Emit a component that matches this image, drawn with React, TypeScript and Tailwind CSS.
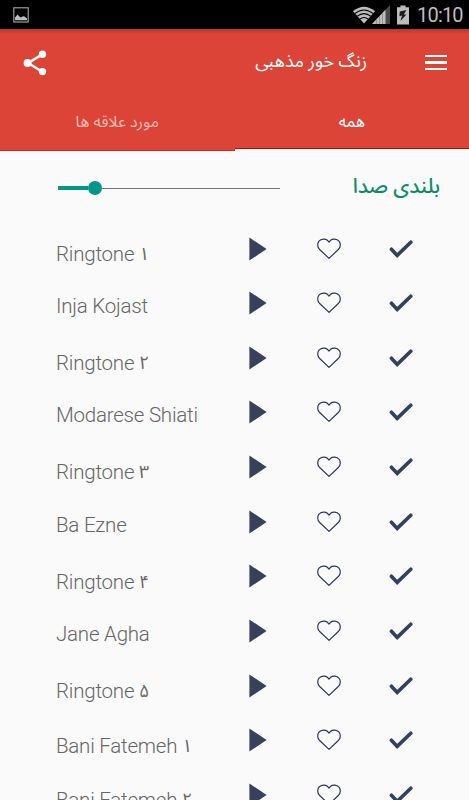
import React from 'react';

interface Ringtone {
  name: string;
  digit?: string;
}

const ringtones: Ringtone[] = [
  { name: 'Ringtone', digit: '۱' },
  { name: 'Inja Kojast' },
  { name: 'Ringtone', digit: '۲' },
  { name: 'Modarese Shiati' },
  { name: 'Ringtone', digit: '۳' },
  { name: 'Ba Ezne' },
  { name: 'Ringtone', digit: '۴' },
  { name: 'Jane Agha' },
  { name: 'Ringtone', digit: '۵' },
  { name: 'Bani Fatemeh', digit: '۱' },
  { name: 'Bani Fatemeh', digit: '۲' },
];

const StatusBar = () => (
  <div className="flex h-[29px] shrink-0 items-center justify-between bg-black pr-[7px] pl-[13px] text-[#bdbdbd]">
    <svg width="16" height="16" viewBox="0 0 16 16" fill="none">
      <rect x="0.8" y="0.8" width="14.4" height="14.2" stroke="#a9a9a9" strokeWidth="1.1" />
      <path d="M2 13.3V10.6L4.6 7.4L6.3 9.4L8 10.4L10 9.3L11.5 9.6L14 11.6V13.3Z" fill="#bdbdbd" />
    </svg>
    <div className="flex items-center">
      <svg width="24" height="20" viewBox="0 0 24 20" fill="none">
        <path d="M1 6.2Q12 -2.8 23 6.2L12 18.6Z" fill="#bdbdbd" />
        <path d="M2.6 8.6Q12 1.3 21.4 8.6M5.1 11.3Q12 5.9 18.9 11.3M7.8 14.1Q12 10.8 16.2 14.1" stroke="#000" strokeWidth="1.1" />
      </svg>
      <svg className="-ml-[4px]" width="18" height="20" viewBox="0 0 18 20">
        <path d="M0 19L18 0V19Z" fill="#4a4a4a" />
        <path d="M0 19L13.5 4.8V19Z" fill="#bdbdbd" />
        <path d="M4.5 14V19M7.5 11V19M10.5 8V19" stroke="#888" strokeWidth="0.8" />
      </svg>
      <svg className="ml-[7px]" width="12" height="20" viewBox="0 0 12 20">
        <path d="M3.4 0.6H8.6V2.2H12V19.4H0V2.2H3.4Z" fill="#bdbdbd" />
        <path d="M9.4 5L2.8 6.6L2.4 11.2L5 10.6L3.4 16L9.4 9.4L6.8 9.6Z" fill="#1c1c1c" />
      </svg>
      <span className="ml-[8px] w-[45px] pt-[2px] text-[20px] leading-[29px] tracking-[-0.8px] whitespace-nowrap">10:10</span>
    </div>
  </div>
);

const ShareIcon = () => (
  <svg width="24" height="26" viewBox="0 0 24 26" fill="#fff">
    <path d="M19 4.6L5 13L19 21.6" fill="none" stroke="#fff" strokeWidth="2.4" />
    <circle cx="19.5" cy="4.2" r="3.7" />
    <circle cx="4.6" cy="13" r="4" />
    <circle cx="19.5" cy="21.6" r="3.7" />
  </svg>
);

const PlayIcon = () => (
  <svg width="18" height="24" viewBox="0 0 18 24">
    <path d="M0.4 0.5L17.6 12L0.4 23.5Z" fill="#37415c" />
  </svg>
);

const HeartIcon = () => (
  <svg width="24" height="22" viewBox="0 0 24 22" fill="none">
    <path
      d="M12 20.4L2.4 11.2C0.3 9 0.2 5.3 2 3.2C4.2 0.7 8.2 0.4 10.4 2.3L12 4L13.6 2.3C15.8 0.4 19.8 0.7 22 3.2C23.8 5.3 23.7 9 21.6 11.2Z"
      stroke="#2c3559"
      strokeWidth="1.2"
      strokeLinejoin="round"
    />
  </svg>
);

const CheckIcon = () => (
  <svg width="24" height="18" viewBox="0 0 24 18" fill="none">
    <path d="M2.4 9.2L8.2 15.4L21.8 2.2" stroke="#33405e" strokeWidth="3.6" strokeLinecap="round" />
  </svg>
);

export default function App() {
  return (
    <div className="flex h-[800px] w-[469px] flex-col overflow-hidden bg-[#fafafa] font-['Roboto','Noto_Sans_Arabic','DejaVu_Sans',sans-serif]">
      <StatusBar />

      {/* Toolbar and tabs */}
      <header className="flex h-[122px] shrink-0 flex-col bg-[#db4437] text-white">
        <div className="flex h-[67px] items-center bg-linear-to-b from-[#b5382d] to-[#db4437] to-[5px] pr-[22px] pl-[23px]">
          <ShareIcon />
          <h1 dir="rtl" className="mr-px ml-auto pb-[3px] text-[18px] leading-none whitespace-nowrap">
            زنگ خور مذهبی
          </h1>
          <div className="ml-[57px] flex w-[22px] flex-col gap-[4px]">
            <span className="h-[2.5px] bg-white" />
            <span className="h-[2.5px] bg-white" />
            <span className="h-[2.5px] bg-white" />
          </div>
        </div>
        <nav className="grid h-[55px] grid-cols-2 text-[16px]">
          <div dir="rtl" className="flex items-center justify-center border-b border-[#d62a1c] pb-[2px] text-[#f3bbb5]">
            مورد علاقه ها
          </div>
          <div dir="rtl" className="flex items-center justify-center border-b-2 border-white pb-px shadow-[inset_0_-1px_0_#d50000]">
            همه
          </div>
        </nav>
      </header>

      {/* Volume */}
      <section className="flex h-[70px] shrink-0 items-center justify-between pr-[29px] pl-[58px]">
        <div className="mt-[4px] flex w-[222px] items-center">
          <span className="h-[4px] w-[30px] bg-[#009688]" />
          <span className="size-[14px] rounded-full bg-[#009688]" />
          <span className="h-px flex-1 bg-[#777]" />
        </div>
        <h2 dir="rtl" className="text-[20.6px] leading-none font-medium text-[#0f8c65]">
          بلندی صدا
        </h2>
      </section>

      <ul className="pt-[0.2px]">
        {ringtones.map(({ name, digit }, i) => (
          <li key={i} className="flex h-[54.67px] items-center pl-[56px]">
            <span className={`w-[193px] text-[20.5px] leading-[24px] font-light tracking-[-0.22px] whitespace-nowrap text-[#666] ${digit ? 'pt-[10.6px]' : 'pt-[5.6px]'}`}>
              {name} {digit && <span className="relative -top-px text-[18px] leading-none font-normal">{digit}</span>}
            </span>
            <PlayIcon />
            <span className="ml-[50px]"><HeartIcon /></span>
            <span className="ml-[48px]"><CheckIcon /></span>
          </li>
        ))}
      </ul>
    </div>
  );
}
